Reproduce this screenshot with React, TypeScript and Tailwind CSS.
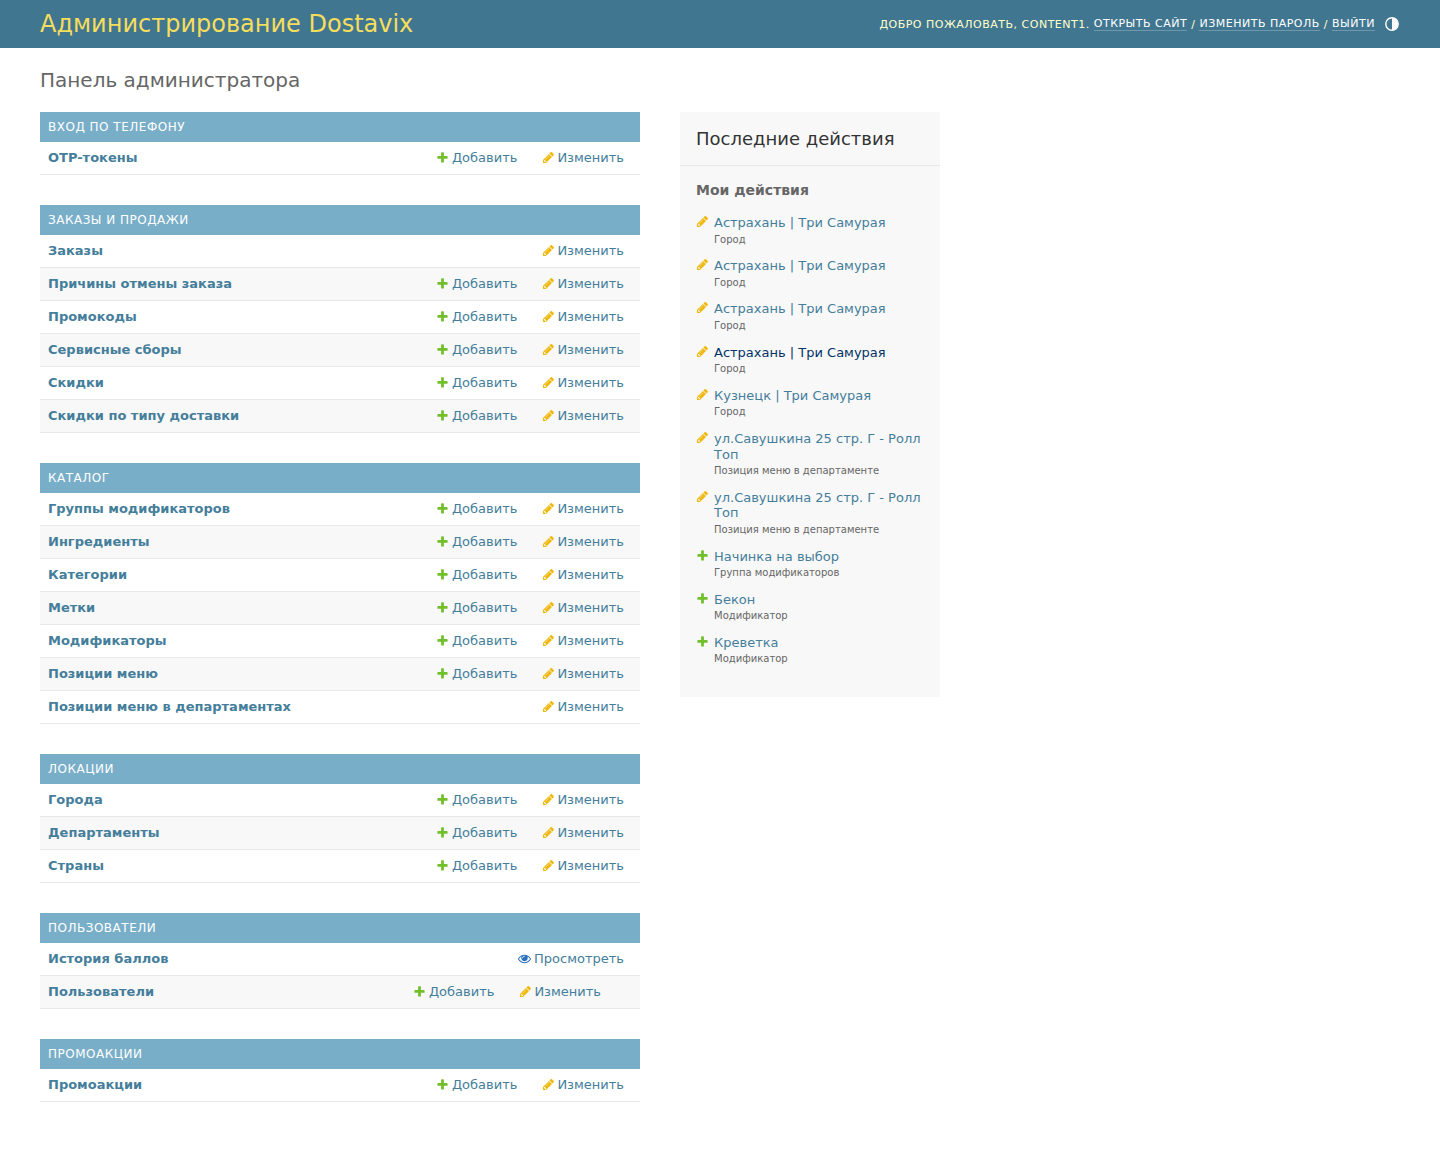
const PLUS = 'M1600 796v192q0 40-28 68t-68 28h-416v416q0 40-28 68t-68 28h-192q-40 0-68-28t-28-68v-416h-416q-40 0-68-28t-28-68v-192q0-40 28-68t68-28h416v-416q0-40 28-68t68-28h192q40 0 68 28t28 68v416h416q40 0 68 28t28 68z'
const PENCIL = 'M491 1536l91-91-235-235-91 91v107h128v128h107zm523-928q0-22-22-22-10 0-17 7l-542 542q-7 7-7 17 0 22 22 22 10 0 17-7l542-542q7-7 7-17zm-54-192l416 416-832 832h-416v-416zm683 96q0 53-37 90l-166 166-416-416 166-165q36-38 90-38 53 0 91 38l235 234q37 39 37 91z'
const EYE = 'M1664 960q-152-236-381-355 61 104 61 225 0 185-131.500 316.500t-316.500 131.500-316.500-131.500-131.500-316.500q0-121 61-225-229 119-381 355 133 205 333.500 326.500t434.500 121.500 434.500-121.500 333.500-326.500zm-720-384q0-20-14-34t-34-14q-125 0-214.500 89.500t-89.500 214.500q0 20 14 34t34 14 34-14 14-34q0-86 61-147t147-61q20 0 34-14t14-34zm848 384q0 34-20 69-140 230-376.500 368.500t-499.500 138.500-499.500-139-376.500-368q-20-35-20-69t20-69q140-229 376.500-368t499.500-139 499.500 139 376.500 368q20 35 20 69z'

function Icon({ d, fill, size = 13 }: { d: string; fill: string; size?: number }) {
  return (
    <svg width={size} height={size} viewBox="0 0 1792 1792" className="shrink-0">
      <path fill={fill} d={d} />
    </svg>
  )
}

type Row = { name: string; add?: boolean; change?: boolean; view?: boolean; inset?: boolean }

const modules: { title: string; rows: Row[] }[] = [
  { title: 'Вход по телефону', rows: [{ name: 'OTP-токены', add: true, change: true }] },
  {
    title: 'Заказы и продажи',
    rows: [
      { name: 'Заказы', change: true },
      { name: 'Причины отмены заказа', add: true, change: true },
      { name: 'Промокоды', add: true, change: true },
      { name: 'Сервисные сборы', add: true, change: true },
      { name: 'Скидки', add: true, change: true },
      { name: 'Скидки по типу доставки', add: true, change: true },
    ],
  },
  {
    title: 'Каталог',
    rows: [
      { name: 'Группы модификаторов', add: true, change: true },
      { name: 'Ингредиенты', add: true, change: true },
      { name: 'Категории', add: true, change: true },
      { name: 'Метки', add: true, change: true },
      { name: 'Модификаторы', add: true, change: true },
      { name: 'Позиции меню', add: true, change: true },
      { name: 'Позиции меню в департаментах', change: true },
    ],
  },
  {
    title: 'Локации',
    rows: [
      { name: 'Города', add: true, change: true },
      { name: 'Департаменты', add: true, change: true },
      { name: 'Страны', add: true, change: true },
    ],
  },
  {
    title: 'Пользователи',
    rows: [
      { name: 'История баллов', view: true },
      { name: 'Пользователи', add: true, change: true, inset: true },
    ],
  },
  { title: 'Промоакции', rows: [{ name: 'Промоакции', add: true, change: true }] },
]

const actions = [
  { name: 'Астрахань | Три Самурая', type: 'Город', icon: 'change' },
  { name: 'Астрахань | Три Самурая', type: 'Город', icon: 'change' },
  { name: 'Астрахань | Три Самурая', type: 'Город', icon: 'change' },
  { name: 'Астрахань | Три Самурая', type: 'Город', icon: 'change', hover: true },
  { name: 'Кузнецк | Три Самурая', type: 'Город', icon: 'change' },
  { name: 'ул.Савушкина 25 стр. Г - Ролл Топ', type: 'Позиция меню в департаменте', icon: 'change' },
  { name: 'ул.Савушкина 25 стр. Г - Ролл Топ', type: 'Позиция меню в департаменте', icon: 'change' },
  { name: 'Начинка на выбор', type: 'Группа модификаторов', icon: 'add' },
  { name: 'Бекон', type: 'Модификатор', icon: 'add' },
  { name: 'Креветка', type: 'Модификатор', icon: 'add' },
]

function ModuleTable({ title, rows }: { title: string; rows: Row[] }) {
  return (
    <div className="mb-[30px]">
      <div className="h-[30px] bg-[#79aec8] px-2 text-[12px] leading-[30px] tracking-[0.5px] text-white uppercase">{title}</div>
      {rows.map((row, i) => (
        <div
          key={row.name}
          className={`flex h-[33px] items-center justify-between border-b border-[#e8e8e8] pb-px pl-2 text-[13px] leading-4 text-[#447e9b] ${
            row.inset ? 'pr-[39px]' : 'pr-4'
          } ${i % 2 === 1 ? 'bg-[#f8f8f8]' : 'bg-white'}`}
        >
          <span className="font-bold">{row.name}</span>
          <div className="flex items-center gap-[24.5px]">
            {row.add && (
              <span className="flex items-center gap-[3px]">
                <Icon d={PLUS} fill="#70bf2b" />
                Добавить
              </span>
            )}
            {row.change && (
              <span className="flex items-center gap-[2.5px]">
                <Icon d={PENCIL} fill="#efb80b" />
                Изменить
              </span>
            )}
            {row.view && (
              <span className="flex items-center gap-[3px]">
                <Icon d={EYE} fill="#2b70bf" />
                Просмотреть
              </span>
            )}
          </div>
        </div>
      ))}
    </div>
  )
}

export default function App() {
  return (
    <div className="min-h-[1172px] bg-white font-['DejaVu_Sans',sans-serif] text-[14px] text-[#333]">
      <header className="flex h-[48px] items-center justify-between bg-[#417690] px-[40px]">
        <div className="text-[24px] leading-[28px] font-normal text-[#f5dd5d]">Администрирование Dostavix</div>
        <div className="flex items-center text-[11px] leading-4 tracking-[0.5px] text-[#ffc] uppercase">
          <span className="mt-px">Добро пожаловать, content1.</span>
          <span className="ml-1 border-b border-white/25 leading-[13px] text-white">Открыть сайт</span>
          <span className="mx-1 mt-px">/</span>
          <span className="border-b border-white/25 leading-[13px] text-white">Изменить пароль</span>
          <span className="mx-1 mt-px">/</span>
          <span className="border-b border-white/25 leading-[13px] text-white">Выйти</span>
          <svg width="14" height="14" viewBox="0 0 14 14" className="mr-px ml-[10px]">
            <circle cx="7" cy="7" r="6.2" fill="#417690" stroke="#fff" strokeWidth="1.4" />
            <path d="M7 1a6 6 0 0 1 0 12z" fill="#fff" />
          </svg>
        </div>
      </header>
      <main className="px-[40px] pt-[20px]">
        <h1 className="mb-[20px] text-[20px] leading-[24px] font-normal text-[#666]">Панель администратора</h1>
        <div className="flex items-start gap-[40px]">
          <div className="w-[600px]">
            {modules.map(m => (
              <ModuleTable key={m.title} title={m.title} rows={m.rows} />
            ))}
          </div>
          <aside className="h-[585px] w-[260px] bg-[#f8f8f8]">
            <h2 className="h-[54px] border-b border-[#e8e8e8] px-4 text-[18px] leading-[54px] font-normal text-[#333]">
              Последние действия
            </h2>
            <div className="px-4 pt-[16px]">
              <h3 className="mb-[16px] text-[14px] leading-[17px] font-bold text-[#666]">Мои действия</h3>
              <ul>
                {actions.map((a, i) => (
                  <li key={i} className="relative mb-[11px] pl-[18px]">
                    <span className="absolute top-0 left-0">
                      {a.icon === 'add' ? <Icon d={PLUS} fill="#70bf2b" /> : <Icon d={PENCIL} fill="#efb80b" />}
                    </span>
                    <div className={`text-[13px] leading-[15.6px] ${a.hover ? 'text-[#036]' : 'text-[#447e9b]'}`}>{a.name}</div>
                    <div className="mt-[1px] text-[10px] leading-[15.6px] text-[#666]">{a.type}</div>
                  </li>
                ))}
              </ul>
            </div>
          </aside>
        </div>
      </main>
    </div>
  )
}
